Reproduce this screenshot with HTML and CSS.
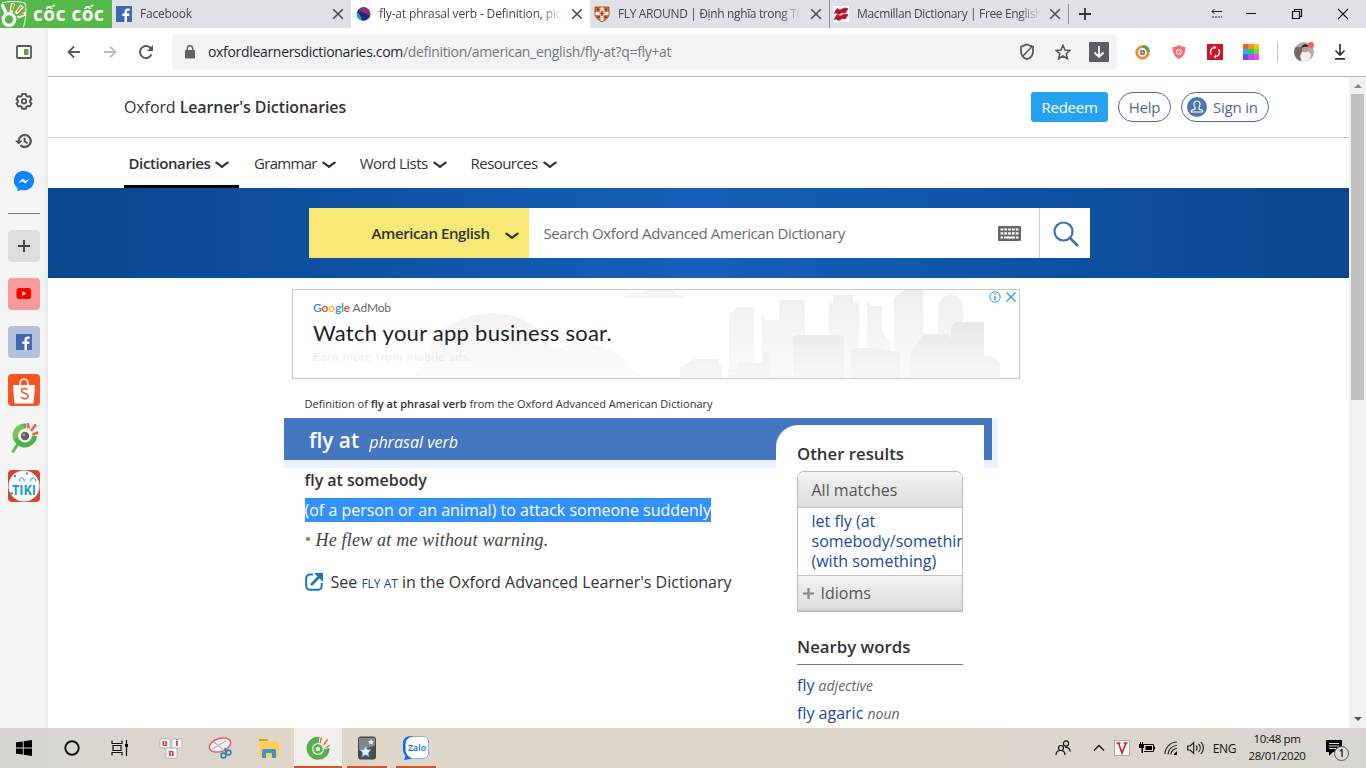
FILE: index.html
```html
<!DOCTYPE html>
<html lang="en">
<head>
<meta charset="utf-8">
<title>fly-at phrasal verb - Definition</title>
<link rel="stylesheet" href="styles.css">
</head>
<body>
<svg width="0" height="0" class="defs">
  <defs>
    <symbol id="x" viewBox="0 0 12 12"><path d="M1.2 1.2l9.6 9.6M10.8 1.2l-9.6 9.6" stroke="#4b4e52" stroke-width="1.6" fill="none"/></symbol>
    <symbol id="chev" viewBox="0 0 14 8"><path d="M1.4 1.6C4 3.6 5.500 4.600 7 6 8.500 4.600 10 3.600 12.600 1.600" stroke="#333" stroke-width="2.300" fill="none" stroke-linecap="round" stroke-linejoin="round"/></symbol>
    <symbol id="fb" viewBox="0 0 16 16"><rect width="16" height="16" fill="#4267b2"/><path d="M11 16V9.900h2.200l.4-2.500H11V6c0-.8.400-1.200 1.300-1.200h1.400V2.600C13.300 2.500 12.600 2.400 12 2.400 9.800 2.400 8.500 3.600 8.500 5.800v1.600H6.400v2.500h2.100V16z" fill="#fff"/></symbol>
  </defs>
</svg>

<header class="tabstrip">
  <div class="brand">
    <svg class="brand-hand" width="28" height="28" viewBox="0 0 28 28">
      <path d="M2 3C9 1 17 1 25 3c1.500 7 1 16-1.500 24" stroke="#fff" stroke-width="1" fill="none"/>
      <circle cx="9" cy="19.500" r="5.800" fill="none" stroke="#fff" stroke-width="3.200"/>
      <path d="M2.500 5.500l4 8.500" stroke="#fff" stroke-width="3.200" stroke-linecap="round"/>
      <path d="M9.500 12l1.500-9 4 .5-2.500 9zM14.500 12.500l6-8 3.500 3-7 7zM17 16.500l8-5 1 4-8 3z" fill="#fff"/>
      <path d="M10.800 10.500l1.200-6.500 2.200.3-1.700 6.500zM16.500 11l4-5 1.700 1.600-4.500 4.600zM18.500 15.500l5-2.800.5 2-5 1.800z" fill="#f47b2a"/>
    </svg>
    <span class="brand-name">cốc cốc</span>
  </div>
  <div class="tab"><svg width="16" height="16"><use href="#fb"/></svg><span class="tab-title t1">Facebook</span><svg width="12" height="12"><use href="#x"/></svg></div>
  <div class="tab active">
    <svg width="16" height="16" viewBox="0 0 16 16"><circle cx="8.500" cy="8" r="6.800" fill="#1e2b6c"/><path d="M3 4a6.800 6.800 0 0 1 12 6c-3-2-8-4-12-6z" fill="#8f2f86"/><path d="M2 6c3 2 4 5 5 8.600A6.800 6.800 0 0 1 2 6z" fill="#19a5d8"/></svg>
    <span class="tab-title t2">fly-at phrasal verb - Definition, pic</span><svg width="12" height="12"><use href="#x"/></svg></div>
  <div class="tab">
    <svg width="16" height="16" viewBox="0 0 16 16"><path d="M1 1h14v7c0 4-4 6-7 8-3-2-7-4-7-8z" fill="#d9772a"/><path d="M8 1v14M1 7.500h14" stroke="#fff" stroke-width="3"/><path d="M8 5v5M5.500 7.500h5" stroke="#c8202e" stroke-width="1.500"/><path d="M3 3.500h2M11 3.500h2M3.500 11h2M10.500 11h2" stroke="#a82020" stroke-width="2"/><path d="M1 1h14v7c0 4-4 6-7 8-3-2-7-4-7-8z" fill="none" stroke="#8b3a1c" stroke-width=".8"/></svg>
    <span class="tab-title t3">FLY AROUND | Định nghĩa trong Từ</span><svg width="12" height="12"><use href="#x"/></svg></div>
  <div class="tab divided">
    <svg width="16" height="16" viewBox="0 0 16 16"><rect width="16" height="16" fill="#fff"/><path d="M1 7.500l3-5 3 1.500 4-2 4 .5-2.500 4.500-3-.5-3.500 2-3-1.500zM1 13.500l3-5 3 1.500 4-2 4 .5-2.500 4.500-3-.5-3.500 2-3-1.500z" fill="#b8122d" stroke="#b8122d" stroke-width=".6"/></svg>
    <span class="tab-title t4">Macmillan Dictionary | Free English</span><svg width="12" height="12"><use href="#x"/></svg></div>
  <div class="newtab"><svg width="12" height="12" viewBox="0 0 12 12"><path d="M6 0v12M0 6h12" stroke="#333" stroke-width="1.800"/></svg></div>
  <div class="window-controls">
    <svg width="12" height="12" viewBox="0 0 12 12"><path d="M1 3.500h10M3.500 1L1 3.500 3.500 6" stroke="#222" fill="none"/><path d="M1 9h10" stroke="#222" stroke-dasharray="2 1"/></svg>
    <svg width="12" height="12" viewBox="0 0 12 12"><path d="M1 5.500h10" stroke="#111"/></svg>
    <svg width="12" height="12" viewBox="0 0 12 12"><path d="M1.500 3.500h7v7h-7zM3.500 3.500v-2h7v7h-2" stroke="#111" fill="none" stroke-width="1.200"/></svg>
    <svg width="12" height="12" viewBox="0 0 12 12"><path d="M1 1l10 10M11 1L1 11" stroke="#111" stroke-width="1.100"/></svg>
  </div>
</header>

<div class="middle">
  <aside class="sidebar">
    <svg class="s-panel" width="16" height="14" viewBox="0 0 16 14"><rect x="1" y="1" width="14" height="12" rx="1" fill="#fff" stroke="#55595d" stroke-width="1.800"/><rect x="8" y="4" width="4.500" height="6" fill="#55a83a"/></svg>
    <svg class="s-gear" width="18" height="18" viewBox="0 0 24 24"><path d="M9.500 2.500h5l.6 2.800 1.700 1 2.800-.9 2.400 4.200-2 1.900v1.900l2 1.900-2.400 4.200-2.800-.9-1.700 1-.6 2.800h-5l-.6-2.800-1.700-1-2.800.9L2 15.300l2-1.900v-1.900L2 9.600l2.400-4.200 2.800.9 1.700-1z" fill="none" stroke="#4b4e52" stroke-width="2.500" stroke-linejoin="round"/><circle cx="12" cy="12.400" r="3" fill="none" stroke="#4b4e52" stroke-width="2.400"/></svg>
    <svg class="s-history" width="18" height="18" viewBox="0 0 24 24"><path d="M13 3a9 9 0 0 0-9 9H1l3.900 3.900.1.100L9 12H6a7 7 0 1 1 2.100 4.900l-1.500 1.500A9 9 0 1 0 13 3zm-1 5v5l4.300 2.500.7-1.200-3.500-2.100V8z" fill="#4b4e52" stroke="#4b4e52" stroke-width="1"/></svg>
    <svg class="s-msg" width="20" height="20" viewBox="0 0 20 20"><path d="M10 0a10 9.500 0 0 1 0 19.200c-1.200 0-2.200-.1-3.200-.5L3.500 20.500V17A9.500 9.500 0 0 1 10 0z" fill="#0a84ff"/><path d="M4 12.600l4.700-5 2.700 2.500L16 7.600l-4.700 5-2.700-2.400z" fill="#fff"/></svg>
    <i class="s-line"></i>
    <div class="tile grey"><svg width="12" height="12" viewBox="0 0 12 12"><path d="M6 0v12M0 6h12" stroke="#444" stroke-width="1.900"/></svg></div>
    <div class="tile pink"><svg width="16" height="12" viewBox="0 0 16 12"><rect x=".5" width="14.500" height="11" rx="2.500" fill="#f00"/><path d="M6.200 3.300v4.500l4-2.250z" fill="#fff"/></svg></div>
    <div class="tile blue"><svg width="16" height="16"><use href="#fb"/></svg></div>
    <svg class="app" width="32" height="32" viewBox="0 0 32 32"><rect width="32" height="32" rx="4" fill="#fb5420"/><path d="M5 11h22l-1.400 18.500H6.400z" fill="#fff"/><path d="M12 11c0-8 8-8 8 0" fill="none" stroke="#fff" stroke-width="1.600"/><path d="M19.500 15.800c-2-2.200-6.200-1.500-6 1 .3 3 6.600 2 6.600 5.400-.1 3-5 3.400-7 .8" fill="none" stroke="#f0502a" stroke-width="1.500"/></svg>
    <svg class="app" width="32" height="32" viewBox="0 0 32 32"><path d="M9.500 22.500L4.500 30.500" stroke="#62b946" stroke-width="2.800"/><path d="M18 1.500A12 12 0 1 0 29 14l-5-.5a7 7 0 1 1-6-7z" fill="#4fb54a"/><path d="M15 2A12 12 0 0 0 5 18l5-3c0-5 2-7 6-8z" fill="#8acb57" opacity=".7"/><circle cx="17" cy="14" r="5.800" fill="#f6f8f5"/><circle cx="17" cy="14" r="4.200" fill="#606066"/><circle cx="15.800" cy="12.700" r="1.300" fill="#aaa"/><path d="M19 6.500l-.5-5 2.500-.5 1 5zM22 8l5-6.500 2 2-5 6z" fill="#f35a4c"/><path d="M24 11.500l6-2.500.3 3.200-5.500 1z" fill="#f35a4c"/></svg>
    <svg class="app" width="32" height="32" viewBox="0 0 32 32"><rect width="32" height="32" rx="4" fill="#d64432"/><circle cx="16" cy="16" r="15.500" fill="#fff"/><g fill="none" stroke="#139bd7"><path d="M11.500 11.500a2.500 2.500 0 1 1 4.500 0M23 11.500a2.500 2.500 0 1 1 4.500 0"/></g><path d="M6 6h2M18 3.500h2M2 23.500h3" stroke="#139bd7" stroke-width="2"/><text x="4" y="25" class="tiki" textLength="24" lengthAdjust="spacingAndGlyphs">TIKI</text></svg>
  </aside>

  <div class="browser">
    <div class="toolbar">
      <span class="slot"><svg width="14" height="14" viewBox="0 0 14 14"><path d="M13 7H2M7 1.500L1.500 7 7 12.500" stroke="#55595d" stroke-width="1.800" fill="none"/></svg></span>
      <span class="slot"><svg width="14" height="14" viewBox="0 0 14 14"><path d="M1 7h11M7 1.500L12.500 7 7 12.500" stroke="#b9bbbe" stroke-width="1.800" fill="none"/></svg></span>
      <span class="slot"><svg width="16" height="16" viewBox="0 0 16 16"><path d="M13.500 10.500A6 6 0 1 1 12 3.500L14 5.500" stroke="#55595d" stroke-width="1.900" fill="none"/><path d="M15 1v6H9z" fill="#55595d"/></svg></span>
      <div class="omnibox">
        <span class="slot"><svg width="12" height="14" viewBox="0 0 12 14"><rect x="1" y="5" width="10" height="8.500" rx="1" fill="#5f6368"/><path d="M3.300 5.500V3.500a2.700 2.700 0 0 1 5.400 0v2" fill="none" stroke="#5f6368" stroke-width="1.400"/></svg></span>
        <span class="url"><b>oxfordlearnersdictionaries.com</b>/definition/american_english/fly-at?q=fly+at</span>
        <span class="slot"><svg width="16" height="18" viewBox="0 0 16 18"><path d="M8 1.500l6 2.200v4.500c0 3.800-2.700 6.800-6 8-3.300-1.200-6-4.200-6-8V3.700z" fill="none" stroke="#55595d" stroke-width="1.800"/><path d="M12.500 4l-9 9.500" stroke="#55595d" stroke-width="1.600"/></svg></span>
        <span class="slot"><svg width="16" height="16" viewBox="0 0 16 16"><path d="M8 1.300l2 4.700 5 .4-3.800 3.300 1.200 5L8 12l-4.400 2.700 1.200-5L1 6.400 6 6z" fill="none" stroke="#55595d" stroke-width="1.600"/></svg></span>
        <span class="slot"><svg width="20" height="20" viewBox="0 0 20 20"><rect width="20" height="20" rx="1" fill="#5a5e62"/><path d="M10 4v11M5.500 10.500L10 15l4.500-4.500" stroke="#fff" stroke-width="1.800" fill="none"/></svg></span>
      </div>
      <div class="extensions">
        <span class="slot"><svg width="16" height="16" viewBox="0 0 16 16"><circle cx="7.500" cy="8.500" r="5.800" fill="none" stroke="#f28a2c" stroke-width="2.800"/><path d="M8 2.500c3.500 0 5.500 3 5.600 5.300" stroke="#46a852" stroke-width="3" fill="none"/><circle cx="7.500" cy="8.500" r="2.700" fill="#62747c"/><path d="M7.500 6.500v4M5.500 8.500h4" stroke="#ccc" stroke-width=".8"/></svg></span>
        <span class="slot"><svg width="14" height="14" viewBox="0 0 14 14"><path d="M7 0c2 1.500 4 2 6.500 2-.2 6-1.500 9.500-6.500 12C2 11.500.700 8 .5 2 3 2 5 1.500 7 0z" fill="#ed6f72"/><circle cx="7" cy="7" r="2.600" fill="none" stroke="#fff" stroke-width=".9"/><path d="M5.300 5.300l3.400 3.400" stroke="#fff" stroke-width=".9"/></svg></span>
        <span class="slot"><svg width="16" height="16" viewBox="0 0 16 16"><rect width="16" height="16" fill="#cf1225"/><path d="M7 3.500a4.500 4.500 0 0 0-2.500 7.300M9 12.500a4.500 4.500 0 0 0 2.500-7.300" fill="none" stroke="#fff" stroke-width="1.400"/><path d="M7 1.500v4l2.500-2zM9 10.500v4l-2.500-2z" fill="#fff"/></svg></span>
        <span class="slot"><svg width="16" height="16" viewBox="0 0 16 16"><path fill="#f15a29" d="M0 0h5v5H0z"/><path fill="#f98d1d" d="M5 0h6v5H5z"/><path fill="#fcc419" d="M11 0h5v5h-5z"/><path fill="#20b8e8" d="M0 5h5v5H0z"/><path fill="#2bc766" d="M5 5h6v5H5z"/><path fill="#7bd63c" d="M11 5h5v5h-5z"/><path fill="#6d4df2" d="M0 10h5v6H0z"/><path fill="#b44df2" d="M5 10h6v6H5z"/><path fill="#ed4df0" d="M11 10h5v6h-5z"/></svg></span>
      </div>
      <span class="slot"><svg width="20" height="20" viewBox="0 0 20 20"><defs><clipPath id="av"><circle cx="10" cy="10" r="10"/></clipPath></defs><g clip-path="url(#av)"><path fill="#b3a9ab" d="M0 0h20v20H0z"/><path fill="#716a70" d="M0 5h8v7l-2 8H0z"/><path d="M8 10c3-2 8-1 9 3l-2 7H8l-2-6z" fill="#f0eef0"/><circle cx="11" cy="7.500" r="2.900" fill="#c49a87"/><path d="M7.500 6c0-4.500 6.500-5 7-1-2-.5-5-.5-7 1z" fill="#222"/></g><circle cx="17" cy="3" r="3" fill="#ff5964"/></svg></span>
      <span class="slot"><svg width="14" height="16" viewBox="0 0 14 16"><path d="M7 0v11M2.500 6.500L7 11l4.500-4.500M2 14.800h10" stroke="#333" stroke-width="1.700" fill="none"/></svg></span>
    </div>

    <div class="viewport">
      <main class="page">
        <div class="site-head">
          <div class="logo">Oxford <b>Learner's Dictionaries</b></div>
          <div class="account">
            <span class="btn redeem">Redeem</span><span class="btn help">Help</span>
            <span class="btn signin"><svg width="20" height="20" viewBox="0 0 20 20"><circle cx="10" cy="10" r="10" fill="#4a76ad"/><path d="M10 4c-3 0-3.500 3-2.500 5.500.4 1 .7 1.500.7 2.300L4.500 13.500V15h11v-1.500l-3.700-1.700c0-.8.300-1.300.7-2.300C13.500 7 13 4 10 4z" fill="none" stroke="#fff" stroke-width="1.200"/></svg><span>Sign in</span></span>
          </div>
        </div>
        <nav class="site-nav">
          <span class="nav-item current"><span>Dictionaries</span><svg width="14" height="8"><use href="#chev"/></svg></span>
          <span class="nav-item n2"><span>Grammar</span><svg width="14" height="8"><use href="#chev"/></svg></span>
          <span class="nav-item n3"><span>Word Lists</span><svg width="14" height="8"><use href="#chev"/></svg></span>
          <span class="nav-item n4"><span>Resources</span><svg width="14" height="8"><use href="#chev"/></svg></span>
        </nav>
        <div class="search-band">
          <div class="search">
            <div class="picker"><span>American English</span><svg width="14" height="8"><use href="#chev"/></svg></div>
            <div class="field"><span>Search Oxford Advanced American Dictionary</span>
              <svg width="23" height="15" viewBox="0 0 23 15"><rect width="23" height="15" rx="1" fill="#666"/><path d="M2.500 3.500h18M2.500 7.300h18" stroke="#fff" stroke-width="2.200" stroke-dasharray="2.800 1"/><path d="M2.500 11.500h18" stroke="#fff" stroke-width="2.200" stroke-dasharray="2.500 1 11 1 2.500 1"/></svg>
            </div>
            <div class="go"><svg width="26" height="26" viewBox="0 0 26 26"><circle cx="10.500" cy="10.500" r="9" fill="none" stroke="#4371a8" stroke-width="2.200"/><path d="M17 17l8 8" stroke="#4371a8" stroke-width="2.500"/></svg></div>
          </div>
        </div>

        <div class="ad">
          <svg class="ad-art" width="726" height="88" viewBox="0 0 726 88">
            <defs><linearGradient id="g" x2="0" y2="1"><stop stop-color="#eeeef0"/><stop offset="1" stop-color="#fbfbfc"/></linearGradient><linearGradient id="h" x2="0" y2="1"><stop stop-color="#e9e9eb"/><stop offset="1" stop-color="#f7f7f8"/></linearGradient></defs>
            <path d="M115 88C140 76 130 58 145 44c25-25 80-30 104 0 8 9 9 16 18 14 15-9 45-6 60 8 12 11 16 22 35 22z" fill="url(#g)" opacity=".7"/>
            <path d="M329 8c8-9 20-4 26-8h24c4 4 8 7 22 8z" fill="#f6f6f7"/>
            <g fill="url(#g)"><path d="M436 88V25l8-8h17v71zM469 88V26h3v4h14V10h26v78zM536 88V13h4V5h20v8h6v75zM574 88V10l4 6h11v25l8 11v36zM601 88V8l10-8h19v88zM645 88V20c0-20 25-20 25 0v68z"/></g>
            <g fill="url(#h)"><path d="M387 88V77l14-8h25v4h3v15zM435 88v-9h9v-6h26V62h7v26zM500 88V48l3-3h45l3 3v40zM558 88V62l6-4h23l20 5v25zM617 88V62l14-18h23l11 12v32zM658 88V37l5-5h28v56zM680 88V66h18l9 6v16z"/></g>
          </svg>
          <div class="ad-copy"><p class="ad-brand"><i class="gb">G</i><i class="gr">o</i><i class="gy">o</i><i class="gb">g</i><i class="gg">l</i><i class="gr">e</i> AdMob</p><p class="ad-title">Watch your app business soar.</p><p class="ad-sub">Earn more from mobile ads.</p></div>
          <svg class="ad-marks" width="28" height="12" viewBox="0 0 28 12"><circle cx="6" cy="6" r="5.200" fill="none" stroke="#1fa8d8"/><path d="M6 5v4.500M6 2.500V4" stroke="#1fa8d8" stroke-width="1.400"/><path d="M17.500 1.500l9 9M26.500 1.500l-9 9" stroke="#1fa8d8" stroke-width="1.400"/></svg>
        </div>

        <p class="crumb">Definition of <b>fly at phrasal verb</b> from the Oxford Advanced American Dictionary</p>
        <div class="entry-wrap">
          <section class="entry">
            <h1><span class="hw">fly at</span><span class="pos">phrasal verb</span></h1>
            <p class="phrase">fly at somebody</p>
            <p class="def"><mark>(of a person or an animal) to attack someone suddenly</mark></p>
            <p class="example"><i class="dot"></i><span>He flew at me without warning.</span></p>
            <p class="see"><svg width="18" height="18" viewBox="0 0 18 18"><path d="M8 1.500H5A3.700 3.700 0 0 0 1.200 5v8A3.700 3.700 0 0 0 5 16.800h8a3.700 3.700 0 0 0 3.700-3.700V10" fill="none" stroke="#1976bd" stroke-width="2"/><path d="M6 12L15 3" stroke="#1976bd" stroke-width="2.600"/><path d="M9 0h9v9z" fill="#1976bd"/></svg><span>See <em>FLY AT</em> in the Oxford Advanced Learner's Dictionary</span></p>
          </section>
          <aside class="results">
            <h2>Other results</h2>
            <div class="accordion">
              <div class="acc-head first">All matches</div>
              <div class="acc-body">let fly (at somebody/something) (with something)</div>
              <div class="acc-head idioms"><svg width="11" height="11" viewBox="0 0 11 11"><path d="M5.500 0v11M0 5.500h11" stroke="#888" stroke-width="2.200"/></svg><span>Idioms</span></div>
            </div>
            <h2 class="nearby">Nearby words</h2>
            <p class="near"><span>fly</span> <i>adjective</i></p>
            <p class="near"><span>fly agaric</span> <i>noun</i></p>
          </aside>
        </div>
      </main>
      <div class="scrollbar"><i class="up"></i><i class="thumb"></i><i class="down"></i></div>
    </div>
  </div>
</div>

<footer class="taskbar">
  <div class="apps">
    <span class="task"><svg width="16" height="16" viewBox="0 0 16 16"><path d="M0 2.300L6.800 1.400v6.100H0zM7.700 1.200L16 0v7.500H7.700zM0 8.400h6.800v6.200L0 13.700zM7.700 8.400H16V16l-8.300-1.200z"/></svg></span>
    <span class="task"><svg width="16" height="16" viewBox="0 0 16 16"><circle cx="8" cy="8" r="6.700" fill="none" stroke="#111" stroke-width="1.900"/></svg></span>
    <span class="task"><svg width="18" height="16" viewBox="0 0 18 16"><path d="M1 .5v3h10v-3M1 15.500v-3h10v3M2 5.500h8v5H2zM15.500 0v16" fill="none" stroke="#111" stroke-width="1.200"/><path d="M14 4h3v3h-3z"/></svg></span>
    <span class="task far"><svg width="24" height="22" viewBox="0 0 24 22"><g fill="#fafafa" stroke="#aaa" stroke-width=".8"><rect x="1" y="2" width="10" height="9" rx="1"/><rect x="13" y="2" width="10" height="9" rx="1"/><rect x="7" y="11" width="11" height="10" rx="1"/></g><g class="key"><text x="3" y="9">u</text><text x="16.500" y="9">i</text><text x="9.500" y="18.500">n</text></g></svg></span>
    <span class="task"><svg width="24" height="24" viewBox="0 0 24 24"><ellipse cx="12" cy="9" rx="11" ry="6.500" transform="rotate(-18 12 9)" fill="#f2f2f4" stroke="#dd6670" stroke-width="1.600"/><path d="M4 13l14-8M6 6l12 10" stroke="#b9b9c0" stroke-width="1.400"/><g fill="none" stroke="#2f83ad" stroke-width="1.600"><circle cx="15.500" cy="19.500" r="2.400"/><circle cx="20.500" cy="16.500" r="2.400"/><path d="M17 12l1 6"/></g></svg></span>
    <span class="task"><svg width="22" height="20" viewBox="0 0 22 20"><path d="M1 2V1h8v2h12v16H1z" fill="#fbd15b"/><path d="M1 1h9v2H1z" fill="#e5a00d"/><path d="M4 20v-7q0-2 2-2h10q2 0 2 2v7h-4v-5H8v5z" fill="#3f8fca"/></svg></span>
    <span class="task on"><svg width="24" height="24" viewBox="0 0 24 24"><path d="M14 1A11.500 11.500 0 1 0 23.500 12l-5.500.2-5-6z" fill="#55b04e"/><circle cx="12" cy="13" r="6" fill="#eef3ea"/><circle cx="12" cy="13" r="3.500" fill="none" stroke="#55b04e" stroke-width="2.400"/><path d="M12.500 8l1.500-8 3 .5-2 8zM16 9l5-8 2.500 1.500L18 10zM18 11.500l6-4 .5 3-5.500 3z" fill="#f7f1e8"/><path d="M13.500 7l1-5.500 1.400.3-1.200 5.500zM17 8.500l4-5.500 1.200.8-4 5.500zM19.500 11l4-2.300.4 1.200-4 2z" fill="#ee5c3a"/></svg></span>
    <span class="task anki"><svg width="18" height="24" viewBox="0 0 18 24"><rect x=".5" y="1" width="17" height="22" rx="2" fill="#4e4e50" stroke="#444"/><path d="M1 2h16v8L1 14z" fill="#858588"/><path d="M7.500 10l1.700 3.500 3.800.5-2.700 2.700.7 3.900-3.500-1.900L4 20.600l.7-3.900L2 14l3.800-.5z" fill="#e8f4ff" stroke="#55aeea"/><path d="M13 3l.9 1.900 2.100.3-1.500 1.500.300 2.100L13 7.800l-1.900 1 .4-2.100L10 5.200l2.100-.3z" fill="#d5efff"/></svg></span>
    <span class="task zalo"><svg width="26" height="24" viewBox="0 0 26 24"><path d="M8 0h10q8 0 8 8v7q0 8-8 8H7l-6 1 1.500-4Q0 17 0 13V8Q0 0 8 0z" fill="#0b68ff"/><path d="M10 .500h9.500q6 0 6 7v8q0 7-7 7H9Q3 20 2.500 14V8Q3 1 10 .5z" fill="#fff"/><text x="5" y="14.500" class="zt" textLength="18" lengthAdjust="spacingAndGlyphs">Zalo</text></svg></span>
  </div>
  <div class="tray">
    <svg class="people" width="16" height="16" viewBox="0 0 16 16"><g fill="none" stroke="#111" stroke-width="1.200"><circle cx="6" cy="8" r="2.500"/><path d="M1 15c0-6 9-6 9 0"/><circle cx="11" cy="3.500" r="2.600"/><path d="M10 7.500c3-.5 5 1 5.300 4"/></g></svg>
    <svg width="12" height="8" viewBox="0 0 12 8"><path d="M1 6.500l5-5 5 5" fill="none" stroke="#111" stroke-width="1.300"/></svg>
    <svg width="16" height="16" viewBox="0 0 16 16"><rect x=".5" y=".5" width="15" height="15" fill="#fff" stroke="#aaa"/><path d="M2.500 3h4M9.500 3h4M4.500 3L8 13l4-10" fill="none" stroke="#d2232a" stroke-width="1.700"/></svg>
    <svg width="16" height="12" viewBox="0 0 16 12"><path d="M5 2.500h9.500v7H5" fill="none" stroke="#111"/><path d="M6.500 4h6.500v4H6.500zM14.500 4.500H16v3h-1.500zM0 2h5v4H4v5H2.500V6H0zM1 0h1v2H1zM3 0h1v2H3z"/></svg>
    <svg width="14" height="14" viewBox="0 0 14 14"><g fill="none" stroke="#222" stroke-width="1.100"><path d="M1 13A12 12 0 0 1 13 1M4 13.500A9 9 0 0 1 13 4.500M7 13.500a6 6 0 0 1 6-6"/></g><path d="M10 14v-1l3-3v4z"/></svg>
    <svg width="17" height="14" viewBox="0 0 17 14"><path d="M.7 5h2.500l3.500-3.500v11L3.200 9H.7zM9 4.500c1.300 1.500 1.300 3.500 0 5M11.500 2.800c2.300 2.500 2.300 6 0 8.400M14 1c3.200 3.500 3.200 8.500 0 12" fill="none" stroke="#111" stroke-width="1.100"/></svg>
    <span class="lang">ENG</span>
    <span class="clock"><span>10:48 pm</span><span>28/01/2020</span></span>
    <span class="notify"><svg width="18" height="17" viewBox="0 0 18 17"><path d="M1 0h16v12H8l-4 4v-4H1z"/><path d="M4 3.500h10M4 6h10M4 8.500h7" stroke="#ddd" stroke-width="1"/></svg><b>1</b></span>
  </div>
</footer>
</body>
</html>
```

FILE: styles.css
```css
* { box-sizing: border-box; }
body { margin: 0; width: 1366px; height: 768px; overflow: hidden; background: #fff; display: flex; flex-direction: column; font-family: "Open Sans", "Noto Sans", sans-serif; color: #333; position: relative; }
p, h1, h2 { margin: 0; font-weight: 400; }
svg { display: block; flex: none; }
span { white-space: nowrap; }
.defs { position: absolute; }

/* tab strip */
.tabstrip { height: 28px; flex: none; background: #dee1e6; display: flex; }
.brand { width: 112px; background: #55b949; display: flex; }
.brand-name { font: 700 19px/29px "Open Sans", sans-serif; color: #fff; letter-spacing: .55px; margin-left: 5px; }
.tab { width: 239px; display: flex; align-items: center; padding: 0 7px 0 4px; gap: 8px; }
.tab.active { background: #fff; width: 239px; }
.tab.divided { border-left: 1px solid #888b90; padding-left: 3px; }
.tab-title { flex: 1; overflow: hidden; font-size: 12px; line-height: 20px; color: #45484c; -webkit-mask-image: linear-gradient(90deg, #000 88%, transparent); mask-image: linear-gradient(90deg, #000 88%, transparent); }
.t1 { letter-spacing: -.2px; }
.t2 { letter-spacing: -.15px; }
.t3 { letter-spacing: -.36px; }
.t4 { letter-spacing: -.36px; }
.newtab { border-left: 1px solid #888b90; width: 44px; margin: 4px 0; padding: 4px 0 0 10px; }
.window-controls { margin-left: auto; display: flex; align-items: center; padding-right: 17px; gap: 34px; }
.window-controls svg:first-child { margin-right: -12px; }

/* side rail */
.middle { height: 700px; flex: none; display: flex; }
.sidebar { width: 48px; flex: none; background: linear-gradient(90deg, #f5f5f5 88%, #e9e9e9); display: flex; flex-direction: column; align-items: center; }
.s-panel { margin-top: 17px; }
.s-gear { margin-top: 33px; }
.s-history { margin-top: 22px; }
.s-msg { margin-top: 21px; }
.s-line { width: 32px; height: 1px; background: #777; margin: 22px 0 16px; flex: none; }
.tile { width: 32px; height: 32px; flex: none; border-radius: 4px; display: flex; align-items: center; justify-content: center; margin-bottom: 16px; }
.grey { background: #dedddb; }
.pink { background: #f99b9b; }
.blue { background: #b3c0de; }
.app { margin-bottom: 16px; }
.tiki { font: 700 14px "Open Sans", sans-serif; fill: #139bd7; }

/* toolbar */
.browser { width: 1318px; display: flex; flex-direction: column; }
.toolbar { height: 49px; flex: none; border-bottom: 1px solid #b4b6b8; display: flex; align-items: center; padding: 0 8px; }
.slot { width: 36px; flex: none; display: flex; align-items: center; justify-content: center; }
.omnibox { width: 945px; height: 36px; margin-left: 8px; background: #f1f3f4; border-radius: 4px; display: flex; align-items: center; }
.url { flex: 1; font-size: 14px; color: #75797d; letter-spacing: -.32px; margin-top: -1px; }
.url b { font-weight: 400; color: #27292c; }
.extensions { display: flex; align-items: center; margin: 0 8px; padding-right: 8px; height: 20px; border-right: 1px solid #c5c7ca; }

/* site */
.viewport { flex: 1; display: flex; min-height: 0; }
.page { width: 1301px; height: 651px; overflow: hidden; }
.site-head { height: 61px; border-bottom: 1px solid #ccc; display: flex; justify-content: space-between; padding: 15px 80px 0 76px; }
.logo { font-size: 16px; line-height: 30px; letter-spacing: -.1px; }
.logo b { font-weight: 600; }
.account { display: flex; gap: 10px; }
.btn { height: 30px; font-size: 15px; line-height: 30px; text-align: center; letter-spacing: -.2px; }
.redeem { width: 77px; background: #27a2f2; color: #fff; border-radius: 3px; font-weight: 500; letter-spacing: -.25px; }
.help, .signin { border: 1px solid #4a6b9e; border-radius: 15px; color: #4a6b9e; line-height: 28px; }
.help { width: 53px; }
.signin { width: 88px; display: flex; align-items: center; gap: 6px; padding-left: 5px; }
.site-nav { height: 50px; display: flex; padding-left: 76px; }
.nav-item { display: flex; gap: 5px; align-items: center; font-size: 15px; letter-spacing: -.55px; height: 50px; }
.nav-item svg { margin-top: 3px; }
.current { width: 115px; border-bottom: 3px solid #000; border-top: 3px solid transparent; padding-left: 4.500px; font-weight: 600; letter-spacing: -.4px; }
.n2 { margin-left: 15px; letter-spacing: -.7px; }
.n3, .n4 { margin-left: 24px; }
.search-band { height: 90px; background: linear-gradient(90deg, #08468f, #155fba 50%, #08468f); padding: 20px 0 0 261px; }
.search { width: 781px; height: 50px; background: #fff; display: flex; }
.picker { width: 220px; background: #f6e975; display: flex; align-items: center; padding: 0 10.500px 0 62.500px; justify-content: space-between; font-size: 15px; font-weight: 600; letter-spacing: -.4px; }
.picker svg { margin-top: 6px; }
.field { flex: 1; display: flex; align-items: center; justify-content: space-between; padding: 0 18px 0 14.500px; font-size: 15px; color: #6b6b6b; letter-spacing: -.4px; }
.go { width: 51px; border-left: 1px solid #ccc; padding: 13px; }

.ad { width: 728px; height: 90px; border: 1px solid #c9c9cc; margin: 11px 0 0 244px; position: relative; }
.ad-art { position: absolute; inset: 0; }
.ad-copy { position: relative; padding: 10px 20px; font-family: Lato, sans-serif; }
.ad-brand { font-size: 12px; line-height: 16px; color: #666; letter-spacing: -.15px; }
.ad-brand i { font-style: normal; font-weight: 600; }
.gb { color: #4285f4; } .gr { color: #ea4335; } .gy { color: #fbbc05; } .gg { color: #34a853; }
.ad-title { font-size: 22px; line-height: 34px; color: #222; white-space: nowrap; letter-spacing: .26px; }
.ad-sub { font-size: 12px; line-height: 14px; color: #ececec; letter-spacing: .55px; }
.ad-marks { position: absolute; top: 1px; right: 2px; }
.crumb { margin: 17px 0 0 256.500px; font-size: 11px; line-height: 16px; white-space: nowrap; }
.crumb b { font-weight: 600; }

.entry-wrap { margin: 6px 0 0 236px; width: 714px; height: 50px; display: flex; background: #eaf2fd; }
.entry { width: 492px; flex: none; }
.entry h1 { height: 42px; background: #4477bf; color: #fff; display: flex; align-items: baseline; padding: 7px 0 0 25px; }
.hw { font-size: 20.800px; font-weight: 600; line-height: 30px; }
.pos { font-size: 16px; font-style: italic; margin-left: 10px; line-height: 30px; }
.phrase { padding: 9px 0 0 20.500px; font-size: 16px; line-height: 22px; font-weight: 600; letter-spacing: -.05px; }
.def { padding: 7px 0 0 20.500px; font-size: 16px; line-height: 24px; white-space: nowrap; }
.def mark { background: #3390ff; color: #fff; display: inline-block; height: 24px; }
.example { padding-left: 22px; display: flex; align-items: center; height: 36px; font: italic 18px/36px "Liberation Serif", serif; color: #444; letter-spacing: .2px; }
.dot { width: 4px; height: 4px; border-radius: 2px; background: #b96a20; margin: 0 5.500px 2px 0; }
.see { display: flex; align-items: center; padding: 0 0 0 20.500px; height: 48px; gap: 8px; font-size: 16px; }
.see em { font-style: normal; font-weight: 500; font-size: 12px; color: #1b3f94; }
.results { width: 216px; height: 320px; border-top: 7px solid #4477bf; position: relative; padding-left: 21px; background: linear-gradient(#4477bf 35px, #eaf2fd 35px, #eaf2fd 43px, #fff 43px); }
.results::before { content: ""; position: absolute; z-index: 0; left: 0; top: 0; width: 208px; height: 320px; background: #fff; border-top-left-radius: 22px; }
.results > * { position: relative; width: 166px; }
.results h2 { font-size: 16.800px; font-weight: 600; line-height: 22px; padding-top: 18px; white-space: nowrap; }
.accordion { margin-top: 6px; border: 1px solid #bbb; border-radius: 7px 7px 0 0; overflow: hidden; height: 141px; }
.acc-head { height: 36px; background: linear-gradient(#f3f3f3, #dcdcdc); font-size: 16px; line-height: 36px; color: #555; border-bottom: 1px solid #c5c5c5; }
.first { padding-left: 13.500px; }
.acc-body { height: 67px; padding: 3px 0 0 13.500px; width: 164px; overflow: hidden; font-size: 16px; line-height: 20px; color: #20489b; }
.idioms { display: flex; align-items: center; gap: 6.500px; padding-left: 5px; border-top: 1px solid #c5c5c5; }
.results .nearby { height: 53px; padding-top: 24px; border-bottom: 1px solid #777; margin-bottom: 6px; }
.near { font-size: 16px; line-height: 28px; height: 28px; color: #20489b; white-space: nowrap; }
.near i { font-size: 14px; color: #666; }

.scrollbar { width: 17px; background: #f1f1f1; display: flex; flex-direction: column; align-items: center; }
.up, .down { border: 4px solid transparent; width: 8px; }
.up { border-bottom-color: #888; border-top: 0; margin: 7px 0 6px; }
.thumb { width: 13px; height: 306px; background: #c1c1c1; }
.down { border-top-color: #555; border-bottom: 0; margin-top: auto; margin-bottom: 7px; }

/* taskbar */
.taskbar { height: 40px; flex: none; background: linear-gradient(90deg, #d8d5d2, #dfd6ca 22%, #e0d7ca 60%, #d9d5d0); display: flex; justify-content: space-between; }
.apps { display: flex; }
.task { width: 48px; height: 40px; display: flex; align-items: center; justify-content: center; margin-right: 1px; border-bottom: 2px solid transparent; border-top: 2px solid transparent; }
.task:nth-child(-n+2) { margin-right: 0; }
.task.far { margin-left: 2px; }
.on { background: #f2efea; border-top-color: #f2efea; border-bottom-color: #c9582c; }
.anki, .zalo { width: 40px; margin: 0 4px; border-bottom-color: #c9582c; }
.anki { border-bottom-color: #c9582c; }
.zalo { margin-left: 5px; }
.key { font: 700 10px "Liberation Serif", serif; fill: #cf2038; }
.zt { font: 600 9px "Open Sans", sans-serif; fill: #0b68ff; }
.tray { display: flex; align-items: center; padding-right: 18px; }
.tray > svg { margin-right: 9px; }
.tray .people { margin-right: 22px; }
.lang { font-size: 12px; letter-spacing: -.4px; }
.lang, .clock { color: #111; }
.clock { margin: -3px 0 0 11px; width: 60px; display: flex; flex-direction: column; align-items: center; font-size: 11.500px; line-height: 17px; letter-spacing: -.4px; }
.notify { margin-left: 18px; position: relative; width: 23px; height: 17px; }
.notify b { position: absolute; left: 9px; top: 6px; width: 15px; height: 15px; border-radius: 8px; border: 1px solid #555; background: #e0dbd5; font-size: 10px; font-weight: 600; line-height: 13px; text-align: center; color: #111; }
```
